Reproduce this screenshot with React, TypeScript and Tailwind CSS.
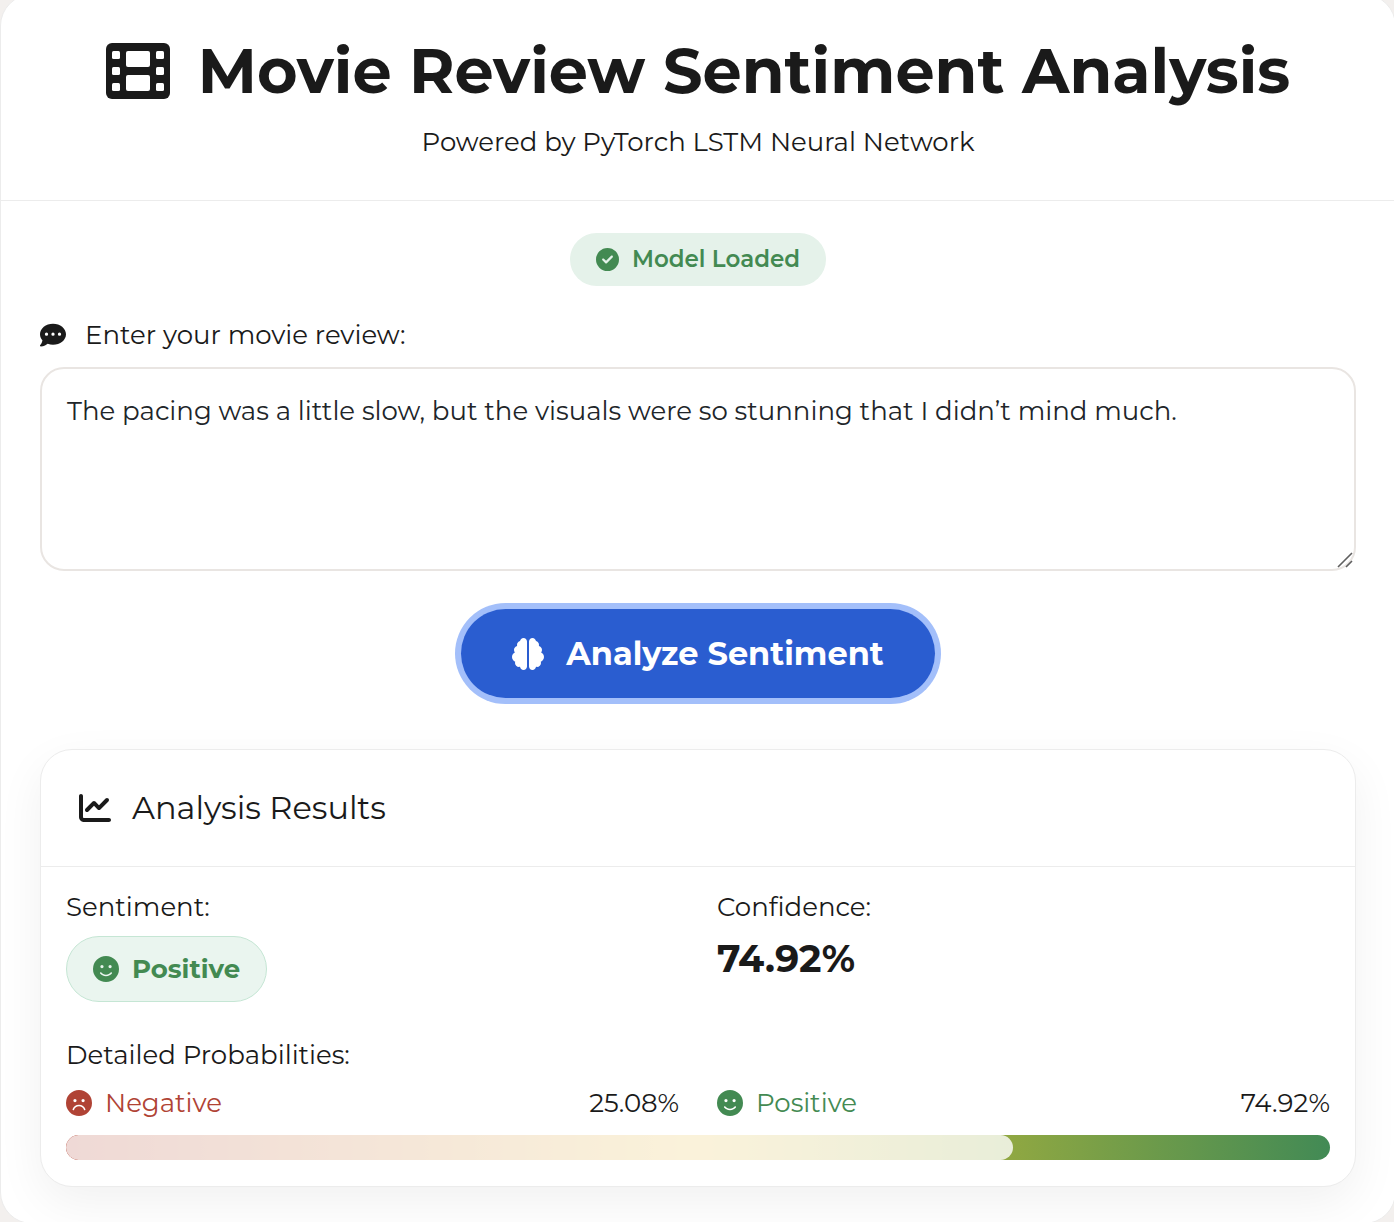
import { useState } from "react";
import {
  FaBrain,
  FaChartLine,
  FaCircleCheck,
  FaCommentDots,
  FaFaceFrown,
  FaFaceSmile,
} from "react-icons/fa6";

const positive = 74.92;
const negative = 25.08;

function FilmIcon() {
  return (
    <svg viewBox="0 0 64 56" className="h-14 w-16 shrink-0" aria-hidden="true">
      <rect width="64" height="56" rx="6" fill="currentColor" />
      <g fill="#fff">
        <rect x="6" y="8" width="8" height="8" rx="1.5" />
        <rect x="6" y="24" width="8" height="8" rx="1.5" />
        <rect x="6" y="40" width="8" height="8" rx="1.5" />
        <rect x="50" y="8" width="8" height="8" rx="1.5" />
        <rect x="50" y="24" width="8" height="8" rx="1.5" />
        <rect x="50" y="40" width="8" height="8" rx="1.5" />
        <rect x="20" y="8" width="24" height="16" rx="2" />
        <rect x="20" y="32" width="24" height="16" rx="2" />
      </g>
    </svg>
  );
}

function Header() {
  return (
    <header className="flex flex-col items-center border-b border-[#ececec] pt-9 pb-[38px]">
      <h1 className="flex items-center gap-7 text-[62px] leading-20 font-bold whitespace-nowrap">
        <FilmIcon />
        Movie Review Sentiment Analysis
      </h1>
      <p className="mt-[11px] leading-10">Powered by PyTorch LSTM Neural Network</p>
    </header>
  );
}

function Results() {
  return (
    <section className="rounded-[32px] border border-[#ececec] bg-white shadow-[0_16px_48px_rgba(0,0,0,0.06)]">
      <h2 className="flex h-[117px] items-center gap-[21px] border-b border-[#ececec] px-[38px] text-[32px]">
        <FaChartLine className="size-8" />
        Analysis Results
      </h2>
      <div className="px-[25px] pt-5 pb-[26px]">
        <div className="grid grid-cols-2 gap-x-[38px]">
          <div>
            <h3 className="leading-10">Sentiment:</h3>
            <div className="mt-[9px] inline-flex h-[66px] items-center gap-[13px] rounded-full border border-[#c5e6d4] bg-[#eaf5ef] px-[26px] font-bold text-[#438a52]">
              <FaFaceSmile className="size-[26px]" />
              Positive
            </div>
          </div>
          <div>
            <h3 className="leading-10">Confidence:</h3>
            <p className="mt-2 text-[38px] leading-12 font-bold">{positive}%</p>
          </div>
        </div>
        <h3 className="mt-[33px] leading-10">Detailed Probabilities:</h3>
        <div className="mt-2 grid grid-cols-2 gap-x-[38px] leading-10">
          <div className="flex items-center justify-between">
            <span className="flex items-center gap-[13px] text-[#b04335]">
              <FaFaceFrown className="size-[26px]" />
              Negative
            </span>
            <span>{negative}%</span>
          </div>
          <div className="flex items-center justify-between">
            <span className="flex items-center gap-[13px] text-[#438a52]">
              <FaFaceSmile className="size-[26px]" />
              Positive
            </span>
            <span>{positive}%</span>
          </div>
        </div>
        <div className="mt-3 h-[25px] overflow-hidden rounded-full bg-[linear-gradient(90deg,#af4132,#e8c045_50%,#8ea742_75%,#428a55)]">
          <div className="h-full rounded-full bg-white/80" style={{ width: `${positive}%` }} />
        </div>
      </div>
    </section>
  );
}

export default function App() {
  const [review, setReview] = useState(
    "The pacing was a little slow, but the visuals were so stunning that I didn’t mind much.",
  );
  return (
    <div className="min-h-screen overflow-hidden bg-[#f3f0ee] font-['Montserrat','Inter',sans-serif] text-[26px] text-[#1a1a1a]">
      <main className="-mt-1.5 -mr-0.5 -mb-1 rounded-[32px] border border-[#ececec] bg-white">
        <Header />
        <div className="flex flex-col px-[39px] pt-8 pb-9">
          <div className="flex h-[53px] items-center gap-[13px] self-center rounded-full bg-[#e5f2ea] px-[26px] text-[23px] font-semibold text-[#438a52]">
            <FaCircleCheck className="size-[23px]" />
            Model Loaded
          </div>
          <label htmlFor="review" className="mt-[29px] flex items-center gap-[19px] leading-10">
            <FaCommentDots className="size-[26px]" />
            Enter your movie review:
          </label>
          <div className="relative mt-3 flex">
            <textarea
              id="review"
              value={review}
              onChange={(e) => setReview(e.target.value)}
              className="h-[204px] w-full resize-y rounded-3xl border-2 border-[#e9e5e2] bg-white px-[25px] py-[22px] leading-10 text-[#212529] outline-none [&::-webkit-resizer]:bg-transparent"
            />
            <svg
              viewBox="0 0 18 18"
              className="pointer-events-none absolute right-[3px] bottom-[3px] size-[18px]"
              fill="none"
              stroke="#5f5f5f"
              strokeWidth="1.6"
              aria-hidden="true"
            >
              <path d="M3 17 17 3M11 17l6-6" />
            </svg>
          </div>
          <button
            type="button"
            className="mt-[38px] mb-[51px] flex h-[89px] items-center gap-[22px] self-center rounded-full bg-[#2a5dd0] px-[51px] text-[32px] font-bold text-white ring-6 ring-[#a3bffa]"
          >
            <FaBrain className="size-8" />
            Analyze Sentiment
          </button>
          <Results />
        </div>
      </main>
    </div>
  );
}
